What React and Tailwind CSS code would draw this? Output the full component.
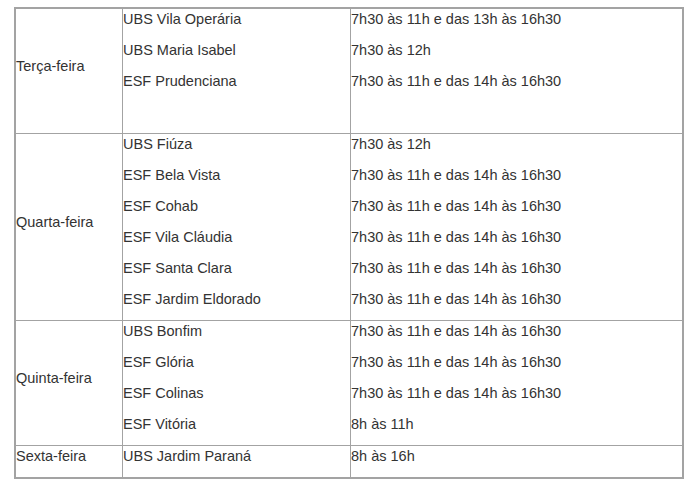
const ROWS = [
  {
    day: 'Terça-feira',
    items: [
      ['UBS Vila Operária', '7h30 às 11h e das 13h às 16h30'],
      ['UBS Maria Isabel', '7h30 às 12h'],
      ['ESF Prudenciana', '7h30 às 11h e das 14h às 16h30'],
      ['', ''],
    ],
  },
  {
    day: 'Quarta-feira',
    items: [
      ['UBS Fiúza', '7h30 às 12h'],
      ['ESF Bela Vista', '7h30 às 11h e das 14h às 16h30'],
      ['ESF Cohab', '7h30 às 11h e das 14h às 16h30'],
      ['ESF Vila Cláudia', '7h30 às 11h e das 14h às 16h30'],
      ['ESF Santa Clara', '7h30 às 11h e das 14h às 16h30'],
      ['ESF Jardim Eldorado', '7h30 às 11h e das 14h às 16h30'],
    ],
  },
  {
    day: 'Quinta-feira',
    items: [
      ['UBS Bonfim', '7h30 às 11h e das 14h às 16h30'],
      ['ESF Glória', '7h30 às 11h e das 14h às 16h30'],
      ['ESF Colinas', '7h30 às 11h e das 14h às 16h30'],
      ['ESF Vitória', '8h às 11h'],
    ],
  },
  {
    day: 'Sexta-feira',
    items: [['UBS Jardim Paraná', '8h às 16h']],
  },
]

function Line({ children }) {
  return <div className="h-[20px] leading-[20px] mb-[11px] whitespace-nowrap">{children}</div>
}

export default function App() {
  return (
    <div
      className="w-[700px] h-[482px] bg-white pt-[7px] pl-[14px] text-[#333] text-[14.5px]"
      style={{ fontFamily: '"Liberation Sans", Arial, sans-serif' }}
    >
      <div className="w-[670px] border-2 border-[#a3a3a3]">
        {ROWS.map((row, i) => (
          <div
            key={row.day}
            className={`flex ${i < ROWS.length - 1 ? 'border-b border-[#a3a3a3]' : ''}`}
          >
            <div className="w-[107px] border-r border-[#a3a3a3] flex items-center">
              <Line>{row.day}</Line>
            </div>
            <div className="w-[228px] border-r border-[#a3a3a3]">
              {row.items.map(([place], j) => (
                <Line key={j}>{place}</Line>
              ))}
            </div>
            <div className="flex-1">
              {row.items.map(([, hours], j) => (
                <Line key={j}>{hours}</Line>
              ))}
            </div>
          </div>
        ))}
      </div>
    </div>
  )
}
